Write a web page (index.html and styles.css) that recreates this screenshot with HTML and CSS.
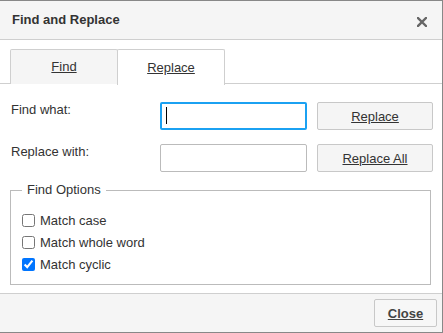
FILE: index.html
```html
<!DOCTYPE html>
<html lang="en">
<head>
    <meta charset="UTF-8"/>
    <title>Find and Replace</title>
    <link rel="stylesheet" href="styles.css">
</head>
<body>
<div class="dialog">
    <div class="dialog-header">
        <span class="title">Find and Replace</span>
        <button class="close-x" title="Close">
            <svg width="10" height="10" viewBox="0 0 10 10">
                <path d="M1 1L9 9M9 1L1 9" stroke="#666" stroke-width="2.4" stroke-linecap="square"/>
            </svg>
        </button>
    </div>
    <div class="dialog-body">
        <ul class="tabs">
            <li><u>Find</u></li>
            <li class="active"><u>Replace</u></li>
        </ul>
        <div class="form">
            <label class="label">Find what:</label>
            <div class="field">
                <input type="text" class="input focused"/>
                <span class="caret"></span>
            </div>
            <button class="btn"><u>Replace</u></button>

            <label class="label">Replace with:</label>
            <div class="field">
                <input type="text" class="input"/>
            </div>
            <button class="btn"><u>Replace All</u></button>
        </div>
        <fieldset class="options">
            <legend>Find Options</legend>
            <label class="check"><input type="checkbox"/> Match case</label>
            <label class="check"><input type="checkbox"/> Match whole word</label>
            <label class="check"><input type="checkbox" checked/> Match cyclic</label>
        </fieldset>
    </div>
    <div class="dialog-footer">
        <button class="btn btn-close"><u>Close</u></button>
    </div>
</div>
</body>
</html>
```

FILE: styles.css
```css
* {
    box-sizing: border-box;
}

body {
    margin: 0;
    font-family: "Liberation Sans", Arial, sans-serif;
    font-size: 13px;
    color: #333;
}

.dialog {
    width: 443px;
    height: 333px;
    border: 1px solid #888;
    border-left: none;
    display: flex;
    flex-direction: column;
    background: #fff;
}

.dialog-header {
    height: 39px;
    flex: none;
    background: #f5f5f5;
    border-bottom: 1px solid #cfcfcf;
    display: flex;
    align-items: center;
    justify-content: space-between;
    padding: 0 15px 0 12px;
}

.dialog-header .title {
    font-weight: bold;
    font-size: 13px;
    color: #333;
    margin-top: -1px;
}

.close-x {
    appearance: none;
    border: none;
    background: none;
    padding: 0;
    width: 10px;
    height: 10px;
    display: block;
    margin-top: 3px;
}

.close-x svg {
    display: block;
}

.dialog-body {
    flex: 1;
    padding-top: 9px;
}

.tabs {
    margin: 0;
    padding: 0 0 0 10px;
    list-style: none;
    display: flex;
    border-bottom: 1px solid #cfcfcf;
    height: 35px;
}

.tabs li {
    width: 108px;
    height: 35px;
    border: 1px solid #cfcfcf;
    border-bottom: none;
    border-radius: 2px 2px 0 0;
    background: #f5f5f5;
    display: flex;
    align-items: center;
    justify-content: center;
    padding-bottom: 1px;
    color: #333;
}

.tabs li.active {
    margin-left: -1px;
    background: #fff;
    height: 36px;
}

.form {
    display: grid;
    grid-template-columns: 139px 147px 116px;
    grid-auto-rows: 28px;
    column-gap: 10px;
    row-gap: 14px;
    padding: 18px 0 0 11px;
}

.label {
    line-height: 16px;
}

.field {
    position: relative;
}

.input {
    width: 100%;
    height: 28px;
    border: 1px solid #bbb;
    border-radius: 2px;
    outline: none;
    margin: 0;
    font: inherit;
    padding: 0 6px;
}

.input.focused {
    border: 2px solid #1ba1f2;
}

.caret {
    position: absolute;
    left: 6px;
    top: 5px;
    width: 1px;
    height: 17px;
    background: #000;
}

.btn {
    appearance: none;
    margin: 0;
    height: 28px;
    border: 1px solid #c8c8c8;
    border-radius: 2px;
    background: #f5f5f5;
    font: inherit;
    color: #333;
    padding: 0;
    cursor: pointer;
}

.options {
    margin: 10px 11px 0 10px;
    border: 1px solid #bbb;
    padding: 11px 0 6px 11px;
    height: 103px;
}

.options legend {
    padding: 0 5px;
    line-height: 16px;
}

.check {
    display: flex;
    align-items: center;
    height: 22px;
}

.check input {
    margin: 0 5px 0 0;
    width: 13px;
    height: 13px;
}

.dialog-footer {
    flex: none;
    height: 39px;
    border-top: 1px solid #cfcfcf;
    background: #f5f5f5;
    display: flex;
    justify-content: flex-end;
    align-items: flex-start;
    padding: 5px 5px 0 0;
}

.btn-close {
    width: 63px;
    font-weight: bold;
    background: #f7f7f7;
    color: #444;
}
```
